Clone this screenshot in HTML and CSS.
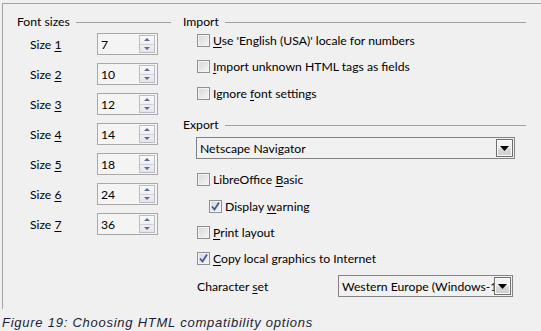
FILE: index.html
```html
<!DOCTYPE html>
<html>
<head>
<meta charset="utf-8">
<link rel="stylesheet" href="styles.css">
</head>
<body>
<div class="frame">
  <div class="col-left">
    <div class="group-head"><span>Font sizes</span><i class="rule"></i></div>
    <div class="sizes">
      <div class="size-row"><span class="size-label">Size <u>1</u></span><div class="spin"><span class="spin-val">7</span><span class="spin-btns"><b class="up"></b><b class="down"></b></span></div></div>
      <div class="size-row"><span class="size-label">Size <u>2</u></span><div class="spin"><span class="spin-val">10</span><span class="spin-btns"><b class="up"></b><b class="down"></b></span></div></div>
      <div class="size-row"><span class="size-label">Size <u>3</u></span><div class="spin"><span class="spin-val">12</span><span class="spin-btns"><b class="up"></b><b class="down"></b></span></div></div>
      <div class="size-row"><span class="size-label">Size <u>4</u></span><div class="spin"><span class="spin-val">14</span><span class="spin-btns"><b class="up"></b><b class="down"></b></span></div></div>
      <div class="size-row"><span class="size-label">Size <u>5</u></span><div class="spin"><span class="spin-val">18</span><span class="spin-btns"><b class="up"></b><b class="down"></b></span></div></div>
      <div class="size-row"><span class="size-label">Size <u>6</u></span><div class="spin"><span class="spin-val">24</span><span class="spin-btns"><b class="up"></b><b class="down"></b></span></div></div>
      <div class="size-row"><span class="size-label">Size <u>7</u></span><div class="spin"><span class="spin-val">36</span><span class="spin-btns"><b class="up"></b><b class="down"></b></span></div></div>
    </div>
  </div>
  <div class="col-right">
    <div class="group-head"><span>Import</span><i class="rule"></i></div>
    <div class="import-list">
      <div class="check-row"><span class="cb"></span><span><u>U</u>se 'English (USA)' locale for numbers</span></div>
      <div class="check-row"><span class="cb"></span><span><u>I</u>mport unknown HTML tags as fields</span></div>
      <div class="check-row"><span class="cb"></span><span>Ignore <u>f</u>ont settings</span></div>
    </div>
    <div class="group-head export-head"><span>Export</span><i class="rule"></i></div>
    <div class="combo combo-wide"><span class="combo-text">Netscape Navigator</span><span class="combo-btn"><svg width="9" height="5" viewBox="0 0 9 5"><path d="M0 0H9L4.5 5Z" fill="#000"/></svg></span></div>
    <div class="check-row row-basic"><span class="cb"></span><span>LibreOffice <u>B</u>asic</span></div>
    <div class="check-row row-warn"><span class="cb checked"><svg width="11" height="11" viewBox="0 0 11 11"><path d="M2 5.5L4.5 8.5L9 1.5" fill="none" stroke="#3f5a9c" stroke-width="1.8"/></svg></span><span>Display <u>w</u>arning</span></div>
    <div class="check-row row-print"><span class="cb"></span><span><u>P</u>rint layout</span></div>
    <div class="check-row row-copy"><span class="cb checked"><svg width="11" height="11" viewBox="0 0 11 11"><path d="M2 5.5L4.5 8.5L9 1.5" fill="none" stroke="#3f5a9c" stroke-width="1.8"/></svg></span><span><u>C</u>opy local graphics to Internet</span></div>
    <div class="charset-row"><span class="charset-label">Character <u>s</u>et</span><div class="combo combo-small"><span class="combo-text">Western Europe (Windows-1252/WinLatin 1)</span><span class="combo-btn"><svg width="9" height="5" viewBox="0 0 9 5"><path d="M0 0H9L4.5 5Z" fill="#000"/></svg></span></div></div>
  </div>
</div>
<div class="caption">Figure 19: Choosing HTML compatibility options</div>
</body>
</html>
```
FILE: styles.css
```css
html, body {
  margin: 0;
  padding: 0;
  background: #f0f0f0;
}
body {
  width: 541px;
  height: 331px;
  overflow: hidden;
  font-family: Lato, "Liberation Sans", Arial, sans-serif;
  font-size: 12.2px;
  color: #000;
}
u { text-decoration: underline; text-underline-offset: 2px; }
.frame {
  margin: 3px 0 0 2px;
  border-top: 1px solid #a3a3a3;
  border-left: 1px solid #a3a3a3;
  height: 305px;
  display: flex;
}
.col-left {
  width: 154px;
  padding: 11px 0 0 14px;
  flex: none;
}
.col-right {
  flex: 1;
  padding: 11px 15px 0 12px;
  display: flex;
  flex-direction: column;
}
.group-head {
  display: flex;
  align-items: center;
  height: 14px;
  line-height: 14px;
}
.rule {
  flex: 1;
  height: 0;
  border-top: 1px solid #a0a0a0;
  margin-left: 6px;
}
.sizes {
  display: flex;
  flex-direction: column;
  gap: 8px;
  margin-top: 4px;
  padding-left: 13px;
}
.size-row {
  display: flex;
  align-items: center;
  height: 22px;
}
.size-label { width: 67px; }
.spin {
  width: 59px;
  height: 20px;
  border: 1px solid #a9a9a9;
  background: #f4f4f4;
  display: flex;
  align-items: center;
  justify-content: space-between;
}
.spin-val { padding-left: 3px; }
.spin-btns {
  width: 14px;
  height: 16px;
  margin-right: 2px;
  border: 1px solid #bcbcc8;
  background: linear-gradient(#fafafa, #e6e6ea);
  display: flex;
  flex-direction: column;
}
.spin-btns b {
  flex: 1;
  display: flex;
  align-items: center;
  justify-content: center;
}
.spin-btns b::before {
  content: "";
  border-left: 3px solid transparent;
  border-right: 3px solid transparent;
}
.spin-btns .up { border-bottom: 1px solid #cfd0da; }
.spin-btns .up::before { border-bottom: 3px solid #5a6c96; }
.spin-btns .down::before { border-top: 3px solid #5a6c96; }
.import-list {
  display: flex;
  flex-direction: column;
  gap: 10.5px;
  margin-top: 3px;
  padding-left: 14px;
}
.check-row {
  display: flex;
  align-items: center;
  height: 16px;
  gap: 3px;
}
.cb {
  width: 11px;
  height: 11px;
  border: 1px solid #8e8f8f;
  background: linear-gradient(135deg, #d6d6d6, #f6f6f6);
  box-shadow: inset 0 0 0 1px #f4f4f4;
  display: flex;
  align-items: center;
  justify-content: center;
  flex: none;
}
.export-head { margin-top: 17px; }
.combo {
  height: 20px;
  border: 1px solid #838383;
  background: #f1f1f1;
  display: flex;
  align-items: center;
  justify-content: space-between;
  overflow: hidden;
}
.combo-wide {
  margin: 5px 0 0 13px;
  width: 317px;
}
.combo-text {
  padding-left: 3px;
  white-space: nowrap;
  overflow: hidden;
  flex: 1;
}
.combo-btn {
  width: 15px;
  height: 16px;
  margin-right: 1px;
  border: 1px solid #6e6e6e;
  box-shadow: inset 0 0 0 1px #fafafa;
  background: linear-gradient(#f2f2f2 45%, #d8d8d8 55%, #cfcfcf);
  display: flex;
  align-items: center;
  justify-content: center;
  flex: none;
}
.row-basic { margin: 12px 0 0 14px; }
.row-warn { margin: 11px 0 0 26px; }
.row-print { margin: 10px 0 0 14px; }
.row-copy { margin: 10px 0 0 14px; }
.charset-row {
  display: flex;
  align-items: center;
  margin: 9px 0 0 14px;
  height: 22px;
}
.charset-label { width: 141px; }
.combo-small { width: 173px; }
.caption {
  margin: 6px 0 0 2px;
  font-family: "Liberation Sans", Arial, sans-serif;
  font-style: italic;
  font-size: 13px;
  letter-spacing: 0.75px;
  color: #1c1c34;
  white-space: nowrap;
}
```
